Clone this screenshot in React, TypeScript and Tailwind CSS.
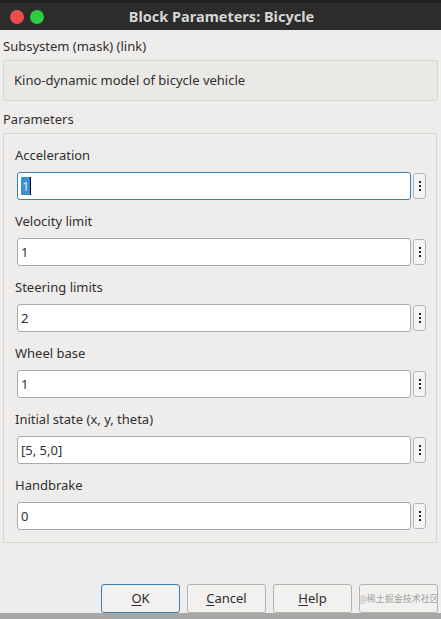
import React from "react";

const params = [
  { label: "Acceleration", value: "1", focused: true },
  { label: "Velocity limit", value: "1" },
  { label: "Steering limits", value: "2" },
  { label: "Wheel base", value: "1" },
  { label: "Initial state (x, y, theta)", value: "[5, 5,0]" },
  { label: "Handbrake", value: "0" },
];

function DotsButton() {
  return (
    <div className="flex h-[26px] w-[13px] flex-col items-center justify-center gap-[2px] rounded-[3px] border border-[#b8b5b1] bg-[#f5f4f2]">
      <span className="h-[2px] w-[2px] bg-[#222]" />
      <span className="h-[2px] w-[2px] bg-[#222]" />
      <span className="h-[2px] w-[2px] bg-[#222]" />
    </div>
  );
}

function ParamRow({ label, value, focused }: { label: string; value: string; focused?: boolean }) {
  return (
    <div className="flex flex-col">
      <div className="h-[18px] leading-[18px]">{label}</div>
      <div className="mt-[8px] flex items-center gap-[2px] pl-[2px]">
        <div
          className={
            "flex h-[28px] flex-1 items-center rounded-[3px] border bg-white px-[3px] " +
            (focused ? "border-[#3c7fb1]" : "border-[#aeaba7]")
          }
        >
          {focused ? (
            <span className="flex items-center">
              <span className="bg-[#3d8fd1] px-[1px] text-[#dbe9f5] leading-[18px]">1</span>
              <span className="h-[18px] w-[1px] bg-black" />
            </span>
          ) : (
            <span>{value}</span>
          )}
        </div>
        <DotsButton />
      </div>
    </div>
  );
}

function Btn({ children, primary }: { children?: React.ReactNode; primary?: boolean }) {
  return (
    <div
      className={
        "flex h-[29px] w-[79px] items-center justify-center overflow-hidden rounded-[3px] border bg-[#f2f1ef] text-[#2e2e2e] " +
        (primary ? "border-[#3c7fb1]" : "border-[#b5b2ae]")
      }
    >
      {children}
    </div>
  );
}

export default function App() {
  return (
    <div
      className="relative flex h-[619px] w-[441px] flex-col overflow-hidden bg-[#efedeb] text-[13px] text-[#2f2f2f]"
      style={{ fontFamily: '"Noto Sans", "Open Sans", sans-serif' }}
    >
      {/* title bar */}
      <div className="flex h-[32px] flex-col bg-[#2c2c2c]">
        <div className="h-[3px] bg-[#1f1f1f]" />
        <div className="relative flex flex-1 items-center">
          <div className="ml-[10px] flex gap-[6px]">
            <span className="h-[14px] w-[14px] rounded-full bg-[#ee4c4c]" />
            <span className="h-[14px] w-[14px] rounded-full bg-[#2fcc42]" />
          </div>
          <div className="absolute inset-0 flex items-center justify-center pl-[2px] text-[14.5px] font-bold text-[#d6d6d6]">
            Block Parameters: Bicycle
          </div>
        </div>
      </div>

      <div className="flex flex-1 flex-col px-[3px]">
        <div className="mt-[7px] h-[18px] leading-[18px]">Subsystem (mask) (link)</div>
        <div className="mt-[5px] flex h-[41px] items-center rounded-[2px] border border-[#d8d5d1] bg-[#ebe9e6] pl-[10px]">
          Kino-dynamic model of bicycle vehicle
        </div>
        <div className="mt-[9px] h-[18px] leading-[18px]">Parameters</div>
        <div className="mt-[5px] mr-[1px] flex h-[410px] flex-col gap-[12px] rounded-[2px] border border-[#d8d5d1] pl-[11px] pr-[10px] pt-[12px]">
          {params.map((p) => (
            <ParamRow key={p.label} {...p} />
          ))}
        </div>

        <div className="mt-[41px] flex justify-end gap-[7px]">
          <Btn primary>
            <span className="underline underline-offset-2">O</span>K
          </Btn>
          <Btn>
            <span className="underline underline-offset-2">C</span>ancel
          </Btn>
          <Btn>
            <span className="underline underline-offset-2">H</span>elp
          </Btn>
          <Btn>
            <span
              className="whitespace-nowrap text-[9px] text-[#a3a19e]"
              style={{ fontFamily: '"Noto Sans CJK SC", sans-serif' }}
            >
              @稀土掘金技术社区
            </span>
          </Btn>
        </div>
      </div>

      <div className="h-[6px] bg-[#a9a7a5]" />
    </div>
  );
}
